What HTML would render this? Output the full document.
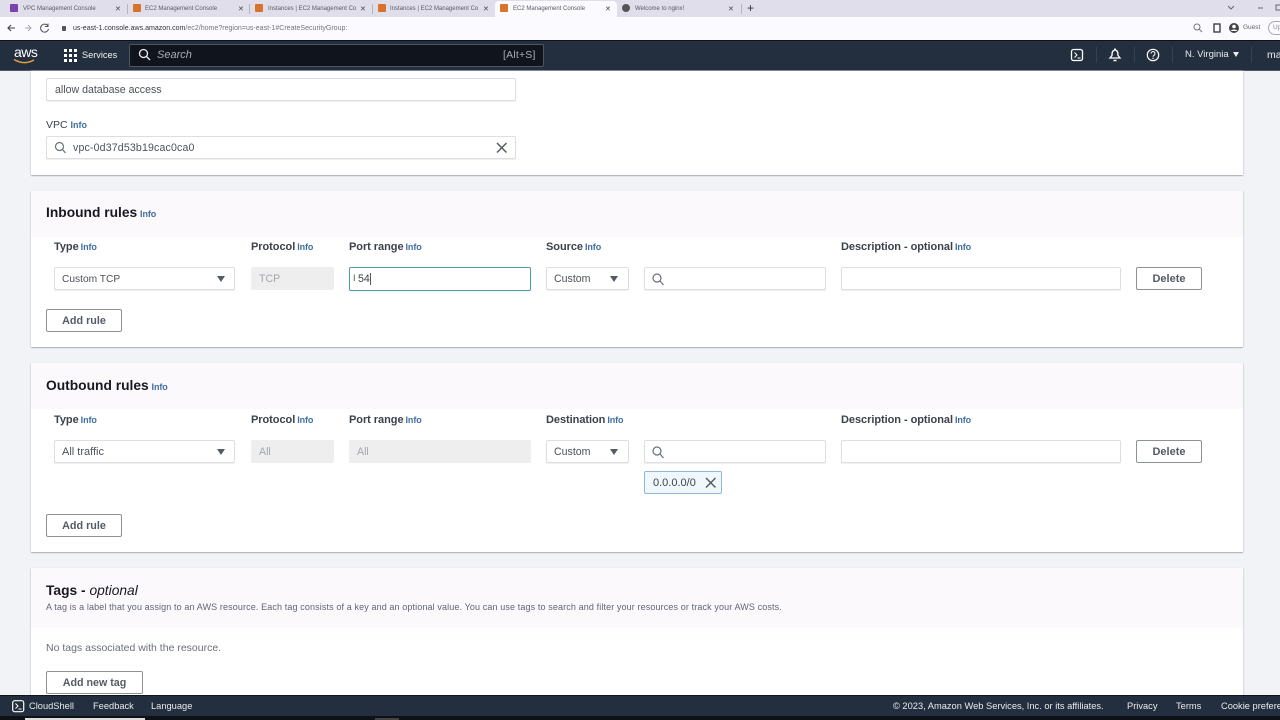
<!DOCTYPE html>
<html><head><meta charset="utf-8"><style>
*{box-sizing:border-box}
html,body{margin:0;padding:0;width:1280px;height:720px;overflow:hidden;background:#f2f3f7;font-family:"Liberation Sans",sans-serif}
.a,.t,.i,.b{position:absolute;white-space:nowrap}
.a{display:block}
.t{color:#16191f;font-size:11px;line-height:14px}
.l{font-weight:bold;font-size:11px;color:#3b424c;line-height:14px;position:absolute;white-space:nowrap;letter-spacing:-.05px}
.l span,.h span{font-size:9px;color:#3f6f9f;font-weight:bold;margin-left:-1px;letter-spacing:-.1px}
.h{position:absolute;font-weight:bold;font-size:13.800px;color:#16191f;line-height:18px;white-space:nowrap}
.card{position:absolute;left:31px;width:1212px;background:#fff;box-shadow:0 1px 1px #a9aeb5,1px 0 1px #e4e5ea,-1px 0 1px #e4e5ea}
.hd{position:absolute;left:31px;width:1212px;background:#fcf9fd}
.i{height:23px;background:#fff;border:1px solid #dcdee2;border-radius:2px;box-shadow:0 1px 1px #eceef0;font-size:10.600px;line-height:23px;color:#4c525a;padding-left:7px}
.d{background:#eeeeef;border-color:#eee;color:#a3a6ab;box-shadow:none}
.b{height:23px;background:#fff;border:1px solid #8d9298;border-radius:2px;font-size:11px;font-weight:bold;line-height:22px;color:#545b64;text-align:center}
.arrow{position:absolute;width:0;height:0;border-left:4.500px solid transparent;border-right:4.500px solid transparent;border-top:6px solid #545b64}
.tab{position:absolute;top:2px;height:14px;font-size:6px;line-height:14px;color:#5a5a66;white-space:nowrap;overflow:hidden}
.ic{position:absolute;top:4px;width:8px;height:8px;background:#d9722a;border-radius:1px}
.x{position:absolute;font-size:7px;top:2px;color:#444;font-family:"DejaVu Sans",sans-serif;line-height:14px}
.w{color:#e9ebed;font-size:9.300px;position:absolute;white-space:nowrap;line-height:14px}
svg{position:absolute;overflow:visible}
</style></head><body>

<!-- chrome tabs -->
<div class="a" style="left:0;top:0;width:1280px;height:17px;background:#dfdeea"></div>
<div class="a" style="left:0;top:17px;width:1280px;height:23px;background:#fafaff"></div>
<div class="a" style="left:495px;top:1px;width:122px;height:16px;background:#fafaff;border-radius:4px 4px 0 0"></div>

<i class="ic" style="left:10px;background:#7c3fb0"></i>
<div class="tab" style="left:23px;width:90px">VPC Management Console</div>
<div class="x" style="left:115px">✕</div>
<div class="a" style="left:127px;top:4px;width:1px;height:10px;background:#b5b5c0"></div>
<i class="ic" style="left:133px"></i>
<div class="tab" style="left:145px;width:90px">EC2 Management Console</div>
<div class="x" style="left:238px">✕</div>
<div class="a" style="left:249px;top:4px;width:1px;height:10px;background:#b5b5c0"></div>
<i class="ic" style="left:255px"></i>
<div class="tab" style="left:268px;width:88px">Instances | EC2 Management Console</div>
<div class="x" style="left:360px">✕</div>
<div class="a" style="left:372px;top:4px;width:1px;height:10px;background:#b5b5c0"></div>
<i class="ic" style="left:378px"></i>
<div class="tab" style="left:390px;width:88px">Instances | EC2 Management Console</div>
<div class="x" style="left:483px">✕</div>
<i class="ic" style="left:500px"></i>
<div class="tab" style="left:513px;width:90px">EC2 Management Console</div>
<div class="x" style="left:605px">✕</div>
<i class="ic" style="left:622px;background:#555;border-radius:50%"></i>
<div class="tab" style="left:635px;width:90px">Welcome to nginx!</div>
<div class="x" style="left:728px">✕</div>
<div class="a" style="left:741px;top:4px;width:1px;height:10px;background:#b5b5c0"></div>
<div class="a" style="left:747px;top:1px;font-size:12px;line-height:14px;color:#333">+</div>
<svg style="left:1118px;top:0" width="162" height="16"><path d="M110 6l3 3 3-3M140 8h5" stroke="#666" fill="none"/><rect x="158" y="5" width="5" height="5" stroke="#666" fill="none"/></svg>

<!-- address row -->
<svg style="left:0;top:17px" width="50" height="22"><path d="M15 11H8M11 8l-3 3 3 3" stroke="#444" fill="none" stroke-width="1.100"/><path d="M25 11h6M28 8l3 3-3 3" stroke="#aaa" fill="none"/><path d="M48 9a4 4 0 1 0 .5 3M48 6.500v3h-3" stroke="#555" fill="none"/></svg>
<div class="a" style="left:62px;top:26px;width:4px;height:5px;background:#555;border-radius:1px"></div>
<div class="a" style="left:73px;top:22px;font-size:7.050px;line-height:14px;color:#777;white-space:nowrap"><span style="color:#333">us-east-1.console.aws.amazon.com</span>/ec2/home?region=us-east-1#CreateSecurityGroup:</div>
<svg style="left:1190px;top:20px" width="90" height="16"><circle cx="7" cy="7" r="3" stroke="#777" fill="none"/><path d="M9 9l3 3" stroke="#777"/><rect x="24" y="4" width="6" height="8" stroke="#333" stroke-width="1.300" fill="none"/><circle cx="44" cy="8" r="5" fill="#444"/><circle cx="44" cy="6.500" r="1.800" fill="#fafaff"/><path d="M40.500 11a4 3 0 0 1 7 0" fill="#fafaff"/></svg>
<div class="a" style="left:1243px;top:21px;font-size:6.500px;line-height:14px;color:#666">Guest</div>
<div class="a" style="left:1268px;top:21px;width:20px;height:14px;border:1px solid #aaa;border-radius:7px;font-size:6.500px;line-height:12px;color:#888;padding-left:4px">Up</div>

<!-- AWS nav -->
<div class="a" style="left:0;top:40px;width:1280px;height:31px;background:#232f3e;border-top:1px solid #0f1319;border-bottom:1px solid #4a5a6c"></div>
<div class="a" style="left:14px;top:45px;font-size:14px;line-height:15px;color:#fff;letter-spacing:-.5px;font-weight:normal">aws</div>
<svg style="left:13px;top:58px" width="24" height="8"><path d="M1 1.500q10 6 20 .5" stroke="#e8a23c" stroke-width="1.500" fill="none"/></svg>
<svg style="left:64px;top:49px" width="13" height="13"><g fill="#fff"><rect x="0" y="0" width="3" height="3"/><rect x="5" y="0" width="3" height="3"/><rect x="10" y="0" width="3" height="3"/><rect x="0" y="5" width="3" height="3"/><rect x="5" y="5" width="3" height="3"/><rect x="10" y="5" width="3" height="3"/><rect x="0" y="10" width="3" height="3"/><rect x="5" y="10" width="3" height="3"/><rect x="10" y="10" width="3" height="3"/></g></svg>
<div class="w" style="left:82px;top:48px;font-size:9.200px;color:#f2f3f3">Services</div>
<div class="a" style="left:129px;top:44px;width:415px;height:23px;background:#10141c;border:1px solid #4b5563;border-radius:2px"></div>
<svg style="left:138px;top:48px" width="14" height="14"><circle cx="5.500" cy="5.500" r="4" stroke="#e9ebed" stroke-width="1.300" fill="none"/><path d="M8.500 8.500l3.500 3.500" stroke="#e9ebed" stroke-width="1.300"/></svg>
<div class="w" style="left:157px;top:48px;font-size:11px;font-style:italic;color:#a9adb3">Search</div>
<div class="w" style="left:503px;top:48px;font-size:10.500px;color:#aab0b8;letter-spacing:.2px">[Alt+S]</div>

<svg style="left:1070px;top:47px" width="14" height="16"><rect x="1.500" y="2.500" width="11" height="11" rx="2" stroke="#fff" stroke-width="1.300" fill="none"/><path d="M4.500 5.500l2.500 2.500-2.500 2.500M7.500 11h3" stroke="#fff" fill="none"/></svg>
<div class="a" style="left:1096px;top:47px;width:1px;height:16px;background:#36424f"></div>
<svg style="left:1108px;top:47px" width="14" height="16"><path d="M7 2l1 1.500c2 .5 2 3 2 5l2 2.500H2l2-2.500c0-2 0-4.500 2-5z" stroke="#fff" stroke-width="1.300" fill="none"/><path d="M5.500 13.500h3" stroke="#fff" stroke-width="1.500"/></svg>
<div class="a" style="left:1134px;top:47px;width:1px;height:16px;background:#36424f"></div>
<svg style="left:1146px;top:47px" width="14" height="16"><circle cx="7" cy="8" r="5.700" stroke="#fff" stroke-width="1.200" fill="none"/><path d="M5 6.500a2 2 0 1 1 3 1.800c-.7.4-1 .7-1 1.500" stroke="#fff" fill="none"/><circle cx="7" cy="11.300" r=".7" fill="#fff"/></svg>
<div class="a" style="left:1172px;top:47px;width:1px;height:16px;background:#36424f"></div>
<div class="w" style="left:1185px;top:48px;font-size:9.500px">N. Virginia</div>
<div class="a" style="left:1233px;top:52px;width:0;height:0;border-left:3.500px solid transparent;border-right:3.500px solid transparent;border-top:5px solid #e9ebed"></div>
<div class="a" style="left:1251px;top:47px;width:1px;height:16px;background:#36424f"></div>
<div class="w" style="left:1267px;top:48px;font-size:10.500px">ma</div>

<!-- card 1 -->
<div class="card" style="top:71px;height:104px"></div>
<div class="i" style="left:46px;top:78px;width:470px;padding-left:8px">allow database access</div>
<div class="t" style="left:46px;top:118px;font-size:10.500px;color:#3b424c">VPC <span style="font-size:9px;font-weight:bold;color:#3f6f9f">Info</span></div>
<div class="i" style="left:46px;top:136px;width:470px;padding-left:26px;letter-spacing:.15px">vpc-0d37d53b19cac0ca0</div>
<svg style="left:54px;top:141px" width="14" height="14"><circle cx="5.500" cy="5.500" r="4" stroke="#68707a" stroke-width="1.200" fill="none"/><path d="M8.500 8.500l3 3.500" stroke="#68707a" stroke-width="1.200"/></svg>
<svg style="left:496px;top:142px" width="12" height="12"><path d="M1 1l9.500 9.500M10.500 1L1 10.500" stroke="#545b64" stroke-width="1.500"/></svg>

<!-- card 2 -->
<div class="card" style="top:191px;height:156px"></div>
<div class="hd" style="top:191px;height:46px"></div>
<div class="h" style="left:46px;top:204px">Inbound rules <span>Info</span></div>
<div class="l" style="left:54px;top:240px">Type <span>Info</span></div>
<div class="l" style="left:251px;top:240px">Protocol <span>Info</span></div>
<div class="l" style="left:349px;top:240px">Port range <span>Info</span></div>
<div class="l" style="left:546px;top:240px">Source <span>Info</span></div>
<div class="l" style="left:841px;top:240px">Description - optional <span>Info</span></div>

<div class="i" style="left:54px;top:267px;width:181px;font-size:10.200px">Custom TCP</div>
<div class="arrow" style="left:216.500px;top:276px"></div>
<div class="i d" style="left:251px;top:267px;width:83px">TCP</div>
<div class="i" style="left:349px;top:267px;width:182px;height:24px;border:1.500px solid #4f9ea6;color:#3b424c;padding-left:8px;line-height:22px">54</div>
<div class="a" style="left:370px;top:273px;width:1px;height:12px;background:#555"></div>
<div class="a" style="left:353px;top:274px;font-size:9px;line-height:9px;color:#555">I</div>
<div class="i" style="left:546px;top:267px;width:83px">Custom</div>
<div class="arrow" style="left:610px;top:276px"></div>
<div class="i" style="left:644px;top:267px;width:182px"></div>
<svg style="left:652px;top:273px" width="13" height="13"><circle cx="5" cy="5" r="4" stroke="#68707a" stroke-width="1.200" fill="none"/><path d="M8 8l3.500 4" stroke="#68707a" stroke-width="1.200"/></svg>
<div class="i" style="left:841px;top:267px;width:280px"></div>
<div class="b" style="left:1136px;top:267px;width:66px;line-height:23px">Delete</div>
<div class="b" style="left:46px;top:309px;width:76px;font-size:10.800px">Add rule</div>

<!-- card 3 -->
<div class="card" style="top:363px;height:189px"></div>
<div class="hd" style="top:363px;height:46px"></div>
<div class="h" style="left:46px;top:377px">Outbound rules <span>Info</span></div>
<div class="l" style="left:54px;top:413px">Type <span>Info</span></div>
<div class="l" style="left:251px;top:413px">Protocol <span>Info</span></div>
<div class="l" style="left:349px;top:413px">Port range <span>Info</span></div>
<div class="l" style="left:546px;top:413px">Destination <span>Info</span></div>
<div class="l" style="left:841px;top:413px">Description - optional <span>Info</span></div>

<div class="i" style="left:54px;top:440px;width:181px;font-size:11px">All traffic</div>
<div class="arrow" style="left:216.500px;top:449px"></div>
<div class="i d" style="left:251px;top:440px;width:83px">All</div>
<div class="i d" style="left:349px;top:440px;width:182px">All</div>
<div class="i" style="left:546px;top:440px;width:83px">Custom</div>
<div class="arrow" style="left:610px;top:449px"></div>
<div class="i" style="left:644px;top:440px;width:182px"></div>
<svg style="left:652px;top:446px" width="13" height="13"><circle cx="5" cy="5" r="4" stroke="#68707a" stroke-width="1.200" fill="none"/><path d="M8 8l3.500 4" stroke="#68707a" stroke-width="1.200"/></svg>
<div class="i" style="left:841px;top:440px;width:280px"></div>
<div class="b" style="left:1136px;top:440px;width:66px;line-height:23px">Delete</div>
<div class="a" style="left:644px;top:471px;width:78px;height:23px;background:#f1f8fd;border:1px solid #8fb8d8;border-radius:2px;font-size:11px;line-height:22px;color:#3b424c;padding-left:8px">0.0.0.0/0</div>
<svg style="left:705px;top:477px" width="12" height="12"><path d="M1 1l9.500 9.500M10.500 1L1 10.500" stroke="#545b64" stroke-width="1.500"/></svg>
<div class="b" style="left:46px;top:514px;width:76px;font-size:10.800px">Add rule</div>

<!-- card 4 -->
<div class="card" style="top:568px;height:130px"></div>
<div class="hd" style="top:568px;height:60px"></div>
<div class="h" style="left:46px;top:582px">Tags - <i style="font-weight:normal">optional</i></div>
<div class="t" style="left:46px;top:600px;font-size:9px;color:#5f6670;letter-spacing:.12px">A tag is a label that you assign to an AWS resource. Each tag consists of a key and an optional value. You can use tags to search and filter your resources or track your AWS costs.</div>
<div class="t" style="left:46px;top:641px;font-size:10.500px;color:#6a7079">No tags associated with the resource.</div>
<div class="b" style="left:46px;top:671px;width:97px;font-size:10.700px">Add new tag</div>

<!-- footer -->
<div class="a" style="left:0;top:695px;width:1280px;height:25px;background:#232f3e;border-top:1px solid #10151c"></div>
<div class="a" style="left:0;top:716px;width:1280px;height:4px;background:#0e1116"></div>
<div class="a" style="left:25px;top:718px;width:120px;height:2px;background:#ddd"></div>
<div class="a" style="left:375px;top:718px;width:24px;height:2px;background:#444"></div>
<svg style="left:12px;top:700px" width="13" height="13"><rect x=".7" y=".7" width="11" height="11" rx="2" stroke="#fff" stroke-width="1.200" fill="none"/><path d="M3.500 3.500l2.500 2.500-2.500 2.500M6.500 9h3" stroke="#fff" fill="none"/></svg>
<div class="w" style="left:29px;top:699px">CloudShell</div>
<div class="w" style="left:93px;top:699px">Feedback</div>
<div class="w" style="left:151px;top:699px">Language</div>
<div class="w" style="left:893px;top:699px">© 2023, Amazon Web Services, Inc. or its affiliates.</div>
<div class="w" style="left:1127px;top:699px">Privacy</div>
<div class="w" style="left:1176px;top:699px">Terms</div>
<div class="w" style="left:1221px;top:699px">Cookie preferences</div>
</body></html>
